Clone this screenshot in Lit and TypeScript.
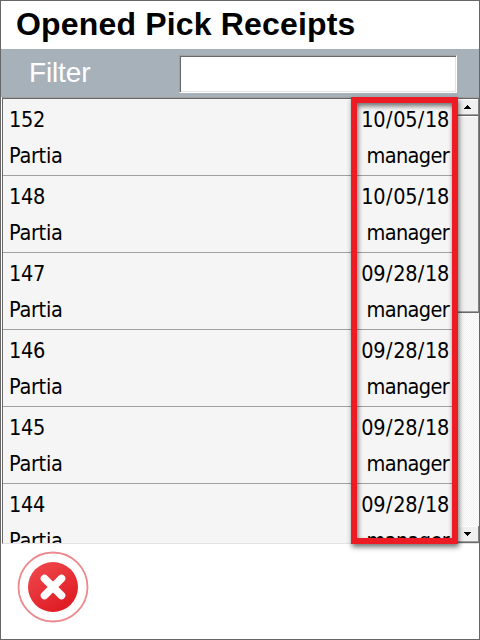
import { LitElement, html, css } from "lit";
import { customElement } from "lit/decorators.js";

interface Receipt {
  id: string;
  date: string;
}

@customElement("app-root")
export class AppRoot extends LitElement {
  static styles = css`
    :host {
      display: flex;
      flex-direction: column;
      position: relative;
      box-sizing: border-box;
      width: 480px;
      height: 640px;
      border: 1px solid #686566;
      background: #fff;
      color: #000;
      overflow: hidden;
      font-family: "Liberation Sans", Arial, sans-serif;
    }
    * { box-sizing: border-box; }
    .title {
      flex: none;
      height: 48px;
      padding-left: 15px;
      font-size: 32px;
      font-weight: 700;
      line-height: 46px;
      letter-spacing: 0.17px;
      white-space: nowrap;
    }
    .title span, .filter label { display: inline-block; }
    .filter {
      flex: none;
      height: 48px;
      display: flex;
      align-items: flex-start;
      background: #a7b1b9;
    }
    .filter label {
      width: 178px;
      padding-left: 28px;
      color: #fff;
      font-size: 28px;
      line-height: 47px;
      letter-spacing: -0.15px;
    }
    .filter input {
      width: 278px;
      height: 38px;
      margin: 6px 0 0;
      padding: 0 6px;
      outline: none;
      border: 1px solid;
      border-color: #a0a0a0 #fff #fff #a0a0a0;
      border-radius: 0;
      box-shadow: inset 1px 1px #696969, inset -1px -1px #e3e3e3;
      background: #fff;
      font: 22px "Liberation Sans", sans-serif;
    }
    .list {
      flex: none;
      display: flex;
      height: 447px;
      margin-left: 1px;
      border: solid;
      border-width: 1px 0 1px 1px;
      border-color: #a0a0a0 #e3e3e3 #e3e3e3 #696969;
      box-shadow: inset 0 1px #696969;
      padding-top: 1px;
      background: #f5f5f5;
    }
    .rows { flex: 1; overflow: hidden; }
    .row {
      height: 77px;
      display: grid;
      grid-template-columns: 1fr auto;
      grid-template-rows: 40px 36px;
      padding: 0 9px 0 6px;
      border-bottom: 1px solid #a0a0a0;
      font-family: "DejaVu Sans Condensed", "DejaVu Sans", sans-serif;
      font-stretch: condensed;
      font-size: 21.5px;
      line-height: 42px;
      letter-spacing: -0.3px;
    }
    .row .bottom { line-height: 34px; }
    .row .right { text-align: right; }
    .row .user { letter-spacing: -0.65px; }
    .slash { padding: 0 1px 0 0.6px; }
    .bar {
      flex: none;
      width: 21px;
      display: flex;
      flex-direction: column;
      background: repeating-conic-gradient(#f0f0f0 0 25%, #fff 0 50%) 0 0 / 2px 2px;
    }
    .btn, .thumb {
      flex: none;
      background: #f0f0f0;
      border-bottom: 1px solid #696969;
      border-right: 1px solid #808080;
      box-shadow: inset 0 -1px #a0a0a0, inset 0 1px #fff;
    }
    .btn {
      height: 17px;
      display: flex;
      align-items: center;
      justify-content: center;
      padding-right: 1px;
    }
    .btn svg { display: block; }
    .thumb { height: 197px; }
    .track { flex: 1; }
    .mark {
      position: absolute;
      left: 350px;
      top: 96px;
      width: 107px;
      height: 447px;
      border: 6px solid #ed1c24;
      box-shadow: 1px 3px 5px rgba(0, 0, 0, 0.55), inset 1px 3px 5px rgba(0, 0, 0, 0.55);
      pointer-events: none;
    }
    .footer { flex: 1; padding: 7px 0 0 16px; }
    .close {
      display: block;
      width: 72px;
      height: 72px;
      padding: 0;
      border: 0;
      background: none;
    }
    .close svg { display: block; }
  `;

  private receipts: Receipt[] = [
    { id: "152", date: "10/05/18" },
    { id: "148", date: "10/05/18" },
    { id: "147", date: "09/28/18" },
    { id: "146", date: "09/28/18" },
    { id: "145", date: "09/28/18" },
    { id: "144", date: "09/28/18" },
  ];

  private renderDate(date: string) {
    return date
      .split("/")
      .map((part, i) => (i ? html`<span class="slash">/</span>${part}` : part));
  }

  render() {
    return html`
      <div class="title"><span>Opened Pick Receipts</span></div>
      <div class="filter">
        <label for="filter">Filter</label>
        <input id="filter" type="text" />
      </div>
      <div class="list">
        <div class="rows">
          ${this.receipts.map(
            (r) => html`<div class="row">
              <span>${r.id}</span><span class="right">${this.renderDate(r.date)}</span>
              <span class="bottom">Partia</span><span class="right bottom user">manager</span>
            </div>`
          )}
        </div>
        <div class="bar">
          <div class="btn">
            <svg width="7" height="4" shape-rendering="crispEdges"><path d="M3 0h1v1h1v1h1v1h1v1H0V3h1V2h1V1h1z" /></svg>
          </div>
          <div class="thumb"></div>
          <div class="track"></div>
          <div class="btn">
            <svg width="7" height="4" shape-rendering="crispEdges"><path d="M0 0h7v1H6v1H5v1H4v1H3V3H2V2H1V1H0z" /></svg>
          </div>
        </div>
      </div>
      <div class="footer">
        <button class="close" aria-label="Close">
          <svg width="72" height="72" viewBox="0 0 72 72">
            <defs>
              <linearGradient id="g" x1="0.2" y1="0" x2="0.8" y2="1">
                <stop offset="0" stop-color="#ef474c" />
                <stop offset="1" stop-color="#dd1920" />
              </linearGradient>
            </defs>
            <circle cx="36" cy="36" r="34.5" fill="#fff" stroke="#ec898c" stroke-width="1.8" />
            <circle cx="36" cy="36" r="25" fill="url(#g)" />
            <path d="M27.5 27.5l17 17M44.5 27.5l-17 17" stroke="#fff" stroke-width="7.6" stroke-linecap="round" />
          </svg>
        </button>
      </div>
      <div class="mark"></div>
    `;
  }
}
